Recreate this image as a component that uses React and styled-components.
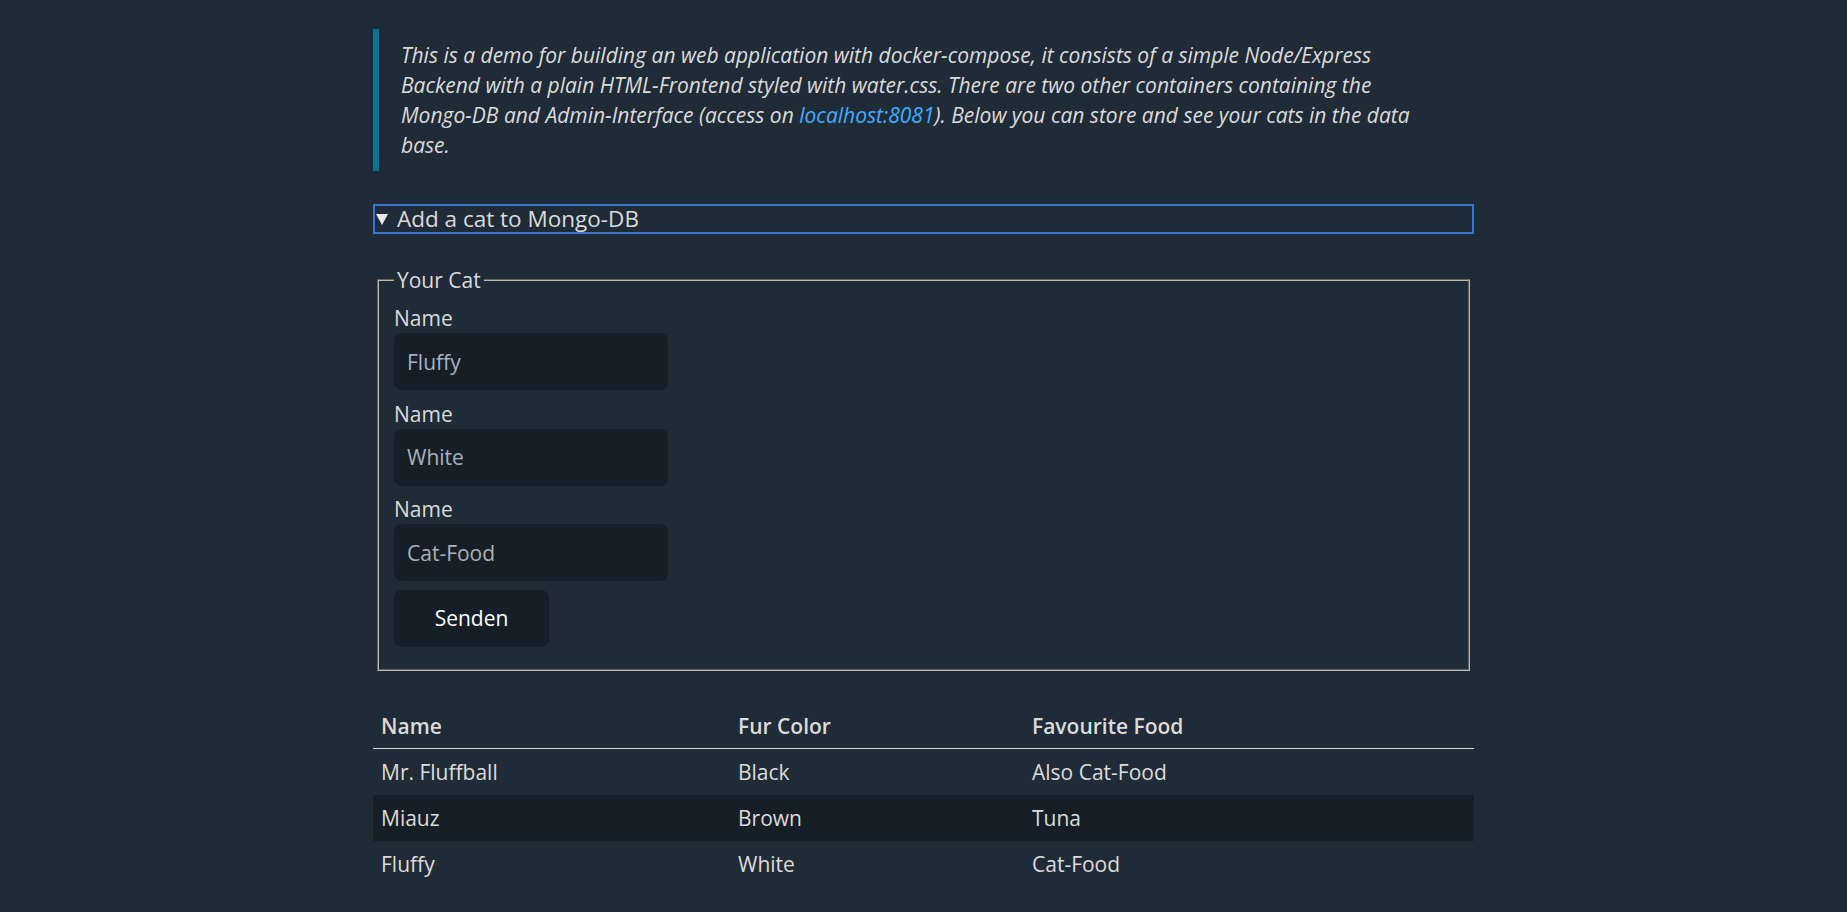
import React from "react";
import styled, { createGlobalStyle } from "styled-components";

const GlobalStyle = createGlobalStyle`
  body {
    margin: 0;
    background: #202b38;
    color: #dbdbdb;
    font-family: "Open Sans", "Noto Sans", sans-serif;
    font-size: 21px;
    line-height: 30px;
  }
`;

const Page = styled.main`
  width: 1101px;
  margin: 0 auto;
  padding: 29px 0 26px;
`;

const Quote = styled.blockquote`
  margin: 0;
  padding: 11px 20px 11px 22px;
  border-left: 6px solid #0b7392;
  font-style: italic;
  line-height: 30px;
`;

const NoBreak = styled.span`
  white-space: nowrap;
`;

const Link = styled.a`
  color: #41adff;
  text-decoration: none;
`;

const Details = styled.details`
  margin-top: 33px;
`;

const Summary = styled.summary`
  display: flex;
  align-items: center;
  gap: 9px;
  height: 30px;
  box-sizing: border-box;
  padding-left: 1px;
  border: 2px solid #3c76d3;
  font-size: 22.5px;
  list-style: none;
  cursor: pointer;

  &::-webkit-details-marker {
    display: none;
  }
`;

const Marker = styled.span`
  width: 0;
  height: 0;
  border-left: 6px solid transparent;
  border-right: 6px solid transparent;
  border-top: 11px solid #e8e8e8;
`;

const Fieldset = styled.fieldset`
  margin: 31px 4px 0;
  padding: 8px 15px 14px;
  border: 2px groove #b8b8b8;
`;

const Legend = styled.legend`
  padding: 0 3px;
`;

const Label = styled.label`
  display: block;
  line-height: 30px;
`;

const Input = styled.input`
  display: block;
  width: 274px;
  height: 57px;
  box-sizing: border-box;
  margin: 0 0 8.5px;
  padding: 0 13px;
  border: none;
  border-radius: 8px;
  background: #161f27;
  color: #dbdbdb;
  font: inherit;
  outline: none;

  &::placeholder {
    color: #a9b1ba;
  }
`;

const Button = styled.button`
  display: block;
  width: 155px;
  height: 57px;
  margin: 0 0 8.5px;
  border: none;
  border-radius: 8px;
  background: #161f27;
  color: #ffffff;
  font: inherit;
  cursor: pointer;
`;

const Table = styled.table`
  width: 100%;
  margin-top: 32px;
  border-collapse: collapse;
  table-layout: fixed;
`;

const Th = styled.th`
  width: ${(p) => p.$w - 16}px;
  height: 45px;
  padding: 0 8px;
  text-align: left;
  font-weight: 600;
  border-bottom: 1px solid #dbdbdb;
`;

const Tr = styled.tr`
  background: ${(p) => (p.$striped ? "#161f27" : "transparent")};
`;

const Td = styled.td`
  height: 46px;
  padding: 0 8px;
`;

const cats = [
  { name: "Mr. Fluffball", fur: "Black", food: "Also Cat-Food" },
  { name: "Miauz", fur: "Brown", food: "Tuna" },
  { name: "Fluffy", fur: "White", food: "Cat-Food" },
];

export default function App() {
  return (
    <>
      <GlobalStyle />
      <Page>
        <Quote>
          This is a demo for building an web application with docker-compose,
          it consists of a simple Node/Express Backend with a plain
          HTML-Frontend styled with water.css. There are two other containers
          containing the <NoBreak>Mongo-DB</NoBreak> and Admin-Interface
          (access on <Link href="#">localhost:8081</Link>). Below you can
          store and see your cats in the data base.
        </Quote>

        <Details open>
          <Summary>
            <Marker />
            Add a cat to Mongo-DB
          </Summary>
          <Fieldset>
            <Legend>Your Cat</Legend>
            <Label>Name</Label>
            <Input placeholder="Fluffy" />
            <Label>Name</Label>
            <Input placeholder="White" />
            <Label>Name</Label>
            <Input placeholder="Cat-Food" />
            <Button>Senden</Button>
          </Fieldset>
        </Details>

        <Table>
          <thead>
            <tr>
              <Th $w={357}>Name</Th>
              <Th $w={294}>Fur Color</Th>
              <Th $w={450}>Favourite Food</Th>
            </tr>
          </thead>
          <tbody>
            {cats.map((cat, i) => (
              <Tr key={cat.name} $striped={i % 2 === 1}>
                <Td>{cat.name}</Td>
                <Td>{cat.fur}</Td>
                <Td>{cat.food}</Td>
              </Tr>
            ))}
          </tbody>
        </Table>
      </Page>
    </>
  );
}
